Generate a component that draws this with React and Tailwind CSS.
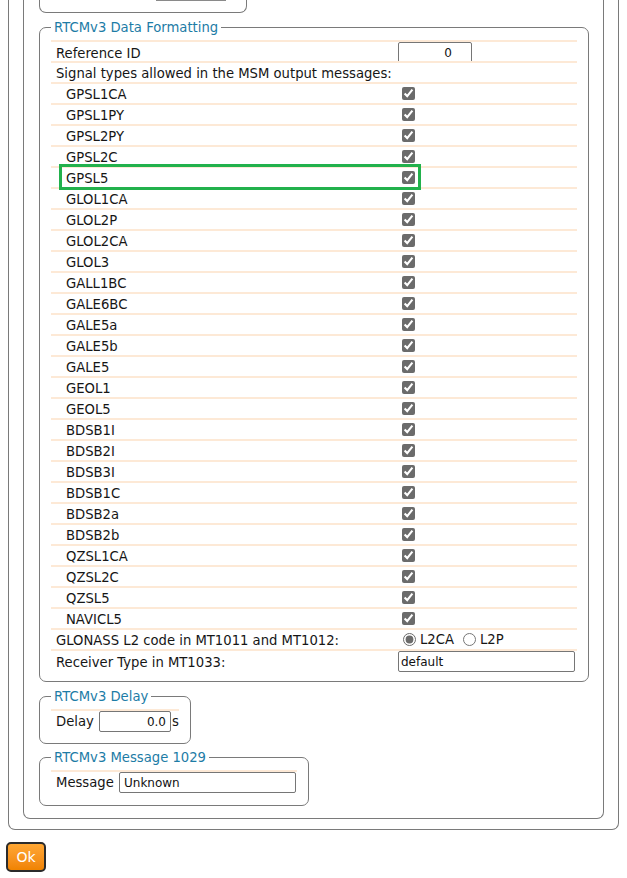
const signals = [
  'GPSL1CA', 'GPSL1PY', 'GPSL2PY', 'GPSL2C', 'GPSL5',
  'GLOL1CA', 'GLOL2P', 'GLOL2CA', 'GLOL3',
  'GALL1BC', 'GALE6BC', 'GALE5a', 'GALE5b', 'GALE5',
  'GEOL1', 'GEOL5',
  'BDSB1I', 'BDSB2I', 'BDSB3I', 'BDSB1C', 'BDSB2a', 'BDSB2b',
  'QZSL1CA', 'QZSL2C', 'QZSL5',
  'NAVICL5',
];

function Row({ label, indent, highlight, children }) {
  return (
    <div className="relative grid h-[21px] grid-cols-[347px_1fr] items-center border-t-2 border-[#fde9d6]">
      <span className={`pt-[2px] leading-[17px] ${indent ? 'pl-[15px]' : 'pl-[5px]'}`}>{label}</span>
      <div className="flex items-center leading-[17px]">{children}</div>
      {/* green marker drawn over the row */}
      {highlight && (
        <div className="pointer-events-none absolute left-[8px] top-[-4px] z-10 h-[26px] w-[362px] border-[3px] border-[#22b14c]" />
      )}
    </div>
  );
}

function Legend({ children }) {
  return <legend className="px-[3px] text-[13.2px] leading-[17px] text-[#1d7ca6]">{children}</legend>;
}

export default function App() {
  return (
    <div className="min-h-screen bg-white font-['DejaVu_Sans',Verdana,sans-serif] text-[13.2px] text-[#161616]">
      {/* outer box, its top is scrolled out of view */}
      <div className="ml-[8px] w-[611px] rounded-b-[7px] border-x border-b border-[#7a7a7a] px-[14px] pb-[10px]">
        <div className="rounded-b-[7px] border-x border-b border-[#7a7a7a] px-[15px] pb-[12px]">
          {/* tail of the previous group */}
          <div className="h-[13px] w-[208px] rounded-b-[7px] border-x border-b border-[#7a7a7a]">
            <div className="ml-[116px] h-px w-[70px] bg-[#8a8a8a]" />
          </div>

          {/* ── RTCMv3 Data Formatting ── */}
          <fieldset className="mt-[6px] w-[550px] rounded-[7px] border border-[#7a7a7a] px-[11px] pb-[11px] pt-[4px]">
            <Legend>RTCMv3 Data Formatting</Legend>

            <Row label="Reference ID">
              <input
                defaultValue="0"
                className="h-[21px] w-[74px] rounded-[2px] border border-[#767676] pr-[19px] text-right text-[12px] text-[#111]"
              />
            </Row>
            <Row label="Signal types allowed in the MSM output messages:" />

            {signals.map((s) => (
              <Row key={s} label={s} indent highlight={s === 'GPSL5'}>
                <input type="checkbox" defaultChecked className="ml-[4px] h-[13px] w-[13px] accent-[#6b6b6b]" />
              </Row>
            ))}

            <Row label="GLONASS L2 code in MT1011 and MT1012:">
              <label className="flex items-center">
                <input type="radio" name="l2code" defaultChecked className="ml-[5px] mr-[4px] h-[13px] w-[13px] accent-[#6b6b6b]" />
                L2CA
              </label>
              <label className="ml-[9px] flex items-center">
                <input type="radio" name="l2code" className="mr-[4px] h-[13px] w-[13px] accent-[#6b6b6b]" />
                L2P
              </label>
            </Row>
            <Row label="Receiver Type in MT1033:">
              <input
                defaultValue="default"
                className="h-[21px] w-[177px] rounded-[2px] border border-[#767676] px-[2px] text-[12px] text-[#111]"
              />
            </Row>
          </fieldset>

          {/* ── RTCMv3 Delay ── */}
          <fieldset className="mt-[6px] w-[152px] rounded-[7px] border border-[#7a7a7a] px-[11px] pb-[11px] pt-[4px]">
            <Legend>RTCMv3 Delay</Legend>
            <div className="flex h-[23px] items-center border-t-2 border-[#fde9d6]">
              <span className="w-[48px] pl-[5px]">Delay</span>
              <input
                defaultValue="0.0"
                className="h-[21px] w-[72px] rounded-[2px] border border-[#767676] pr-[4px] text-right text-[12px] text-[#111]"
              />
              <span className="ml-[1px]">s</span>
            </div>
          </fieldset>

          {/* ── RTCMv3 Message 1029 ── */}
          <fieldset className="mt-[5px] w-[270px] rounded-[7px] border border-[#7a7a7a] px-[11px] pb-[12px] pt-[4px]">
            <Legend>RTCMv3 Message 1029</Legend>
            <div className="flex h-[23px] items-center border-t-2 border-[#fde9d6]">
              <span className="w-[68px] pl-[5px]">Message</span>
              <input
                defaultValue="Unknown"
                className="h-[21px] w-[177px] rounded-[2px] border border-[#767676] px-[4px] text-[12px] text-[#111]"
              />
            </div>
          </fieldset>
        </div>
      </div>

      <button className="ml-[6px] mt-[12px] h-[30px] w-[40px] rounded-[5px] border-2 border-[#2b2b2b] bg-gradient-to-b from-[#ffa733] to-[#f08300] text-[14px] text-white">
        Ok
      </button>
    </div>
  );
}
